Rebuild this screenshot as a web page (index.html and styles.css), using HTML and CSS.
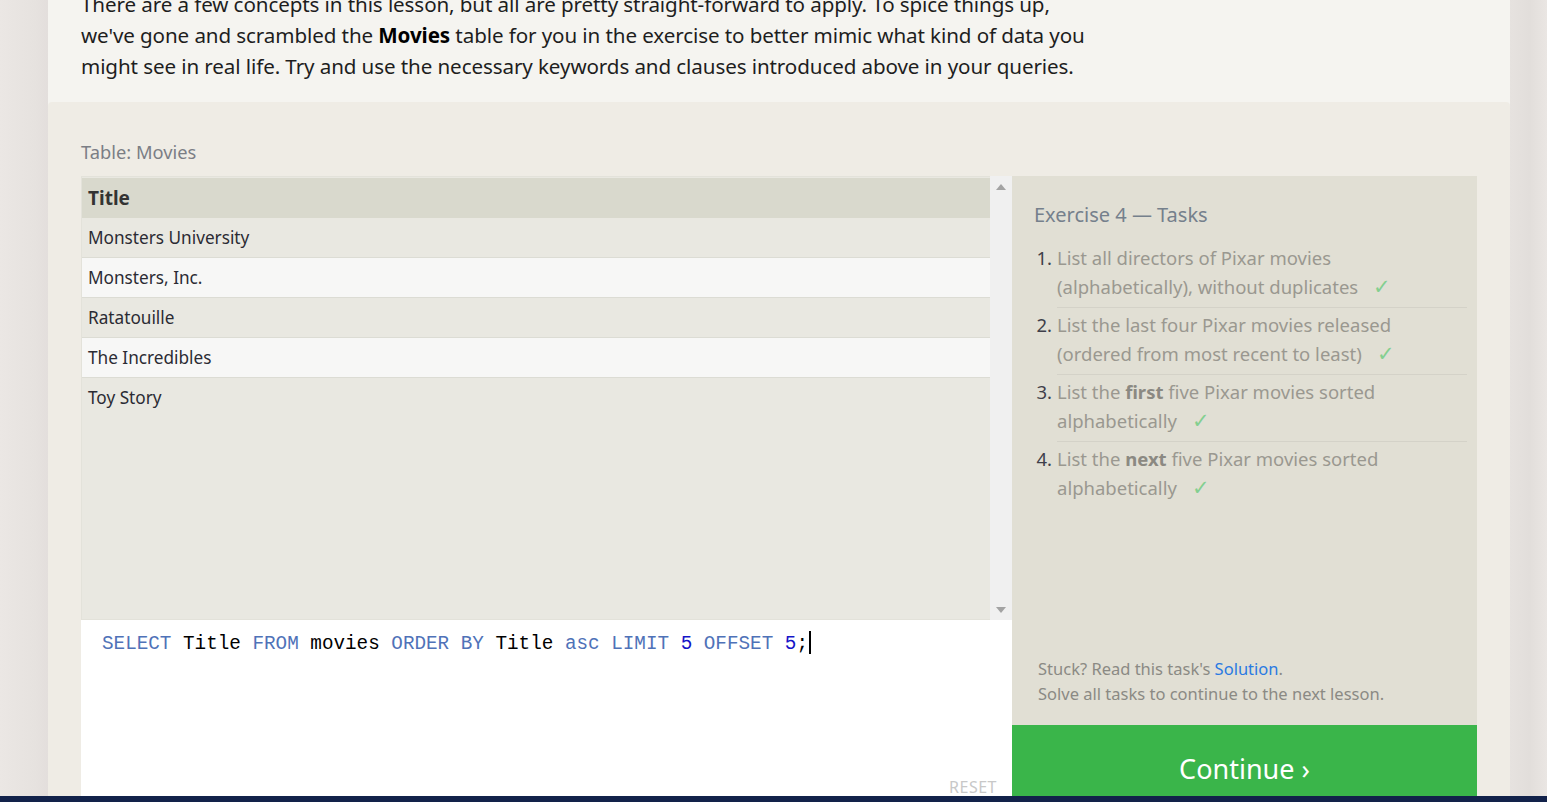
FILE: index.html
```html
<!DOCTYPE html>
<html>
<head>
<meta charset="utf-8">
<link rel="stylesheet" href="styles.css">
</head>
<body>
<div class="shell">
  <div class="page">
    <section class="intro">
      <p>There are a few concepts in this lesson, but all are pretty straight-forward to apply. To spice things up,<br>we've gone and scrambled the <strong>Movies</strong> table for you in the exercise to better mimic what kind of data you<br>might see in real life. Try and use the necessary keywords and clauses introduced above in your queries.</p>
    </section>
    <section class="exercise">
      <div class="table-label">Table: Movies</div>
      <div class="workspace">
        <div class="left">
          <div class="table-wrap">
            <div class="table">
              <div class="row head">Title</div>
              <div class="row">Monsters University</div>
              <div class="row alt">Monsters, Inc.</div>
              <div class="row">Ratatouille</div>
              <div class="row alt">The Incredibles</div>
              <div class="row">Toy Story</div>
            </div>
            <div class="scrollbar">
              <svg class="arrow" width="10" height="6" viewBox="0 0 10 6"><path d="M0 6 L5 0 L10 6 Z" fill="#a3a3a3"/></svg>
              <svg class="arrow" width="10" height="6" viewBox="0 0 10 6"><path d="M0 0 L5 6 L10 0 Z" fill="#a3a3a3"/></svg>
            </div>
          </div>
          <div class="editor">
            <div class="code"><span class="kw">SELECT</span> Title <span class="kw">FROM</span> movies <span class="kw">ORDER BY</span> Title <span class="kw">asc</span> <span class="kw">LIMIT</span> <span class="num">5</span> <span class="kw">OFFSET</span> <span class="num">5</span>;<span class="cursor"></span></div>
            <div class="reset">RESET</div>
          </div>
        </div>
        <div class="right">
          <div class="tasks">
            <h2>Exercise 4 — Tasks</h2>
            <ol>
              <li><span class="n">1.</span><span class="t">List all directors of Pixar movies (alphabetically), without duplicates <span class="check">✓</span></span></li>
              <li><span class="n">2.</span><span class="t">List the last four Pixar movies released (ordered from most recent to least) <span class="check">✓</span></span></li>
              <li><span class="n">3.</span><span class="t">List the <b>first</b> five Pixar movies sorted alphabetically <span class="check">✓</span></span></li>
              <li><span class="n">4.</span><span class="t">List the <b>next</b> five Pixar movies sorted alphabetically <span class="check">✓</span></span></li>
            </ol>
            <div class="help">
              <p>Stuck? Read this task's <a>Solution</a>.</p>
              <p>Solve all tasks to continue to the next lesson.</p>
            </div>
          </div>
          <div class="continue">Continue ›</div>
        </div>
      </div>
    </section>
  </div>
</div>
<div class="footer-bar"></div>
</body>
</html>
```

FILE: styles.css
```css
html, body {
  margin: 0;
  padding: 0;
}
body {
  height: 802px;
  overflow: hidden;
  background: linear-gradient(to right, #ebe7e4 0, #e6e2df 36px, #e3dedc 48px, #e6e2df 1510px, #e2dedb 1530px, #eae6e3 1547px);
  font-family: "Segoe UI", "Noto Sans", sans-serif;
}
.shell {
  padding-left: 48px;
  width: 1462px;
}
.page {
  margin-top: -11px;
  background: #f5f4f0;
}
.intro {
  padding: 0 33px 20px;
}
.intro p {
  margin: 0;
  font-size: 20.6px;
  line-height: 31px;
  color: #1e1e1e;
  letter-spacing: -0.1px;
}
.intro strong {
  color: #000;
}
.exercise {
  background: #efece5;
  padding: 38px 33px 0;
  border-radius: 4px 4px 0 0;
}
.table-label {
  font-size: 18.3px;
  line-height: 24px;
  color: #7b7e85;
  margin-bottom: 12px;
}
.workspace {
  display: flex;
}
.left {
  width: 931px;
  display: flex;
  flex-direction: column;
}
.table-wrap {
  height: 444px;
  display: flex;
  background: #e9e8e1;
}
.table {
  flex: 1;
  border: 1px solid #e3e2da;
  border-right: none;
  padding-top: 1px;
}
.row {
  height: 39px;
  line-height: 39px;
  padding-left: 6px;
  font-size: 17.2px;
  color: #2b2b33;
  background: #e9e8e1;
  border-bottom: 1px solid #dcdcd4;
}
.row.alt {
  background: #f7f7f6;
}
.row.head {
  background: #d9d9cd;
  font-weight: bold;
  color: #333;
  font-size: 19px;
  border-bottom: none;
  height: 40px;
  line-height: 40px;
}
.row:last-child {
  border-bottom: none;
}
.scrollbar {
  width: 22px;
  background: #f0f0f0;
  display: flex;
  flex-direction: column;
  justify-content: space-between;
  align-items: center;
  padding: 8px 0 7px;
  box-sizing: border-box;
}
.arrow {
  display: block;
}
.editor {
  background: #fff;
  height: 200px;
  padding: 11px 21px 0;
  position: relative;
}
.code {
  font-family: "Liberation Mono", "DejaVu Sans Mono", monospace;
  font-size: 19.3px;
  line-height: 26px;
  color: #000;
  white-space: pre;
}
.kw {
  color: #4f72b8;
}
.num {
  color: #1414c8;
}
.cursor {
  display: inline-block;
  width: 2px;
  height: 23px;
  background: #000;
  vertical-align: -5px;
  margin-left: 1px;
}
.reset {
  position: absolute;
  right: 15px;
  top: 156px;
  font-size: 16px;
  color: #c8c8c8;
  letter-spacing: 0.5px;
}
.right {
  width: 465px;
  display: flex;
  flex-direction: column;
}
.tasks {
  background: #e1dfd4;
  height: 549px;
  padding: 25px 10px 0 22px;
  box-sizing: border-box;
  display: flex;
  flex-direction: column;
}
.tasks h2 {
  margin: 0 0 14px;
  font-weight: normal;
  font-size: 20px;
  line-height: 28px;
  color: #75808c;
}
.tasks ol {
  list-style: none;
  margin: 0;
  padding: 0;
}
.tasks li {
  display: flex;
  font-size: 18.5px;
  line-height: 29px;
  color: #9a9890;
}
.tasks .n {
  width: 18px;
  flex: none;
  text-align: right;
  padding-right: 5px;
  color: #3f3f4a;
}
.tasks .t {
  flex: 1;
  border-bottom: 1px solid #d4d2c8;
  padding-bottom: 5px;
  margin-bottom: 2px;
}
.tasks li:last-child .t {
  border-bottom: none;
}
.tasks b {
  color: #8b8982;
}
.check {
  color: #84cf90;
  margin-left: 10px;
  font-family: "DejaVu Sans", sans-serif;
  font-size: 21px;
  font-weight: 200;
}
.help {
  margin-top: auto;
  padding: 0 0 19px 4px;
}
.help p {
  margin: 0;
  font-size: 16.5px;
  line-height: 25px;
  color: #8b8a84;
}
.help a {
  color: #2a7ae2;
}
.continue {
  background: #3ab54a;
  height: 90px;
  color: #fff;
  font-size: 27px;
  text-align: center;
  line-height: 88px;
}
.footer-bar {
  position: fixed;
  left: 0;
  right: 0;
  bottom: 0;
  height: 6px;
  background: #12224a;
}
```
